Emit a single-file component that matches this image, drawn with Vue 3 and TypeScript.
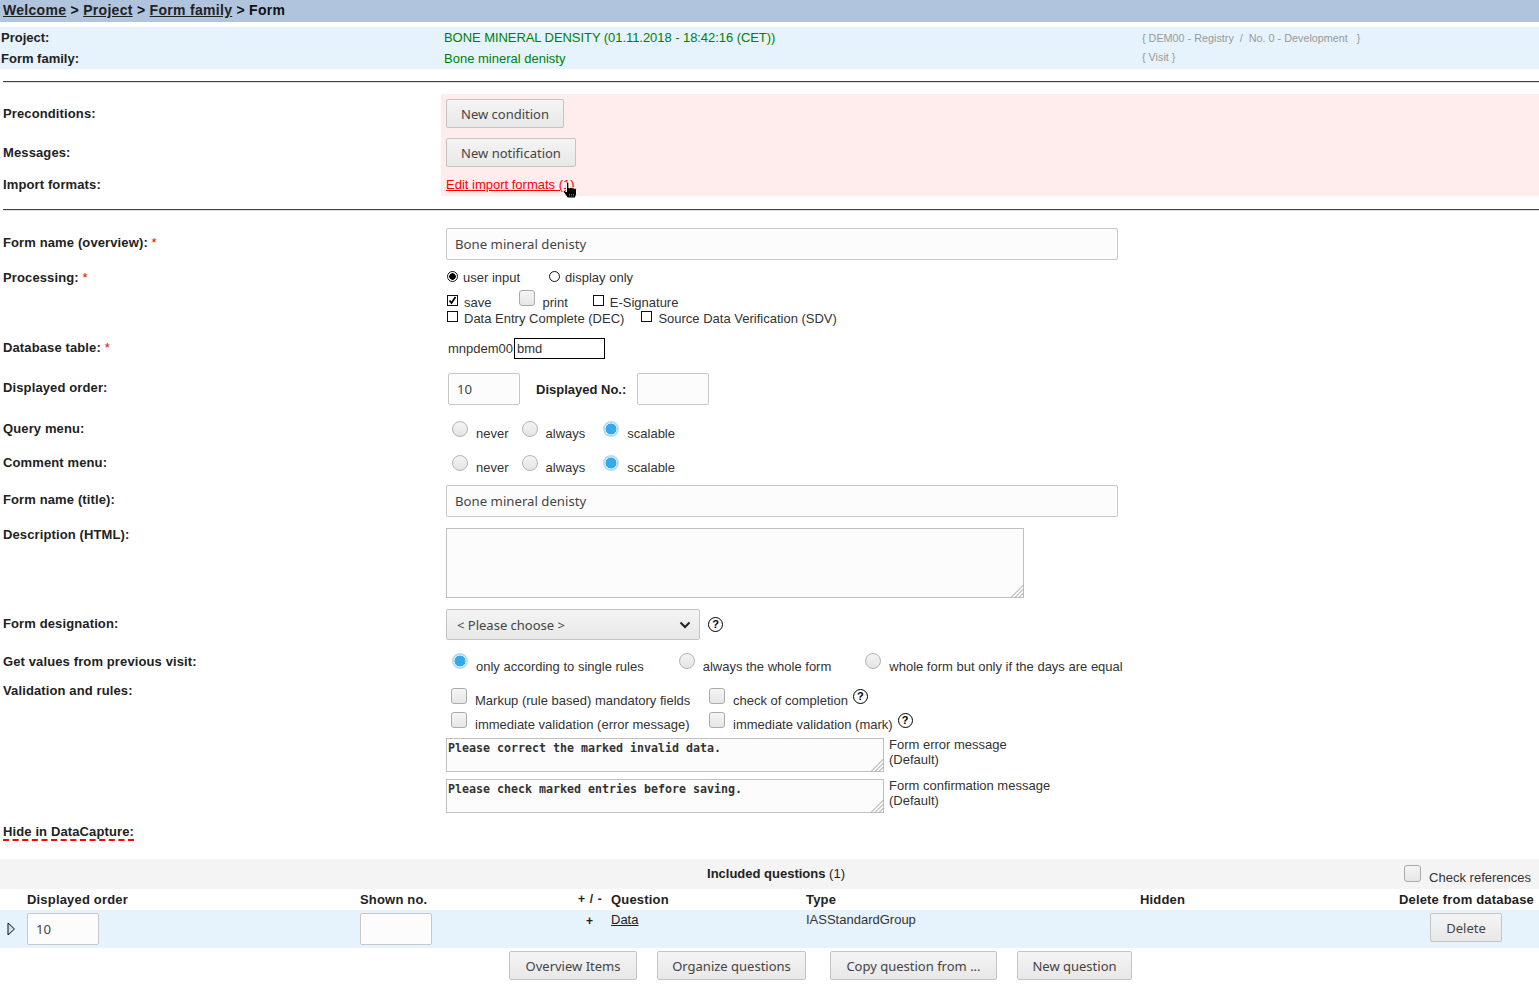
<script setup lang="ts">
const menus: { label: string; cls: string }[] = [
  { label: 'Query menu:', cls: 'h-query' },
  { label: 'Comment menu:', cls: 'h-comment' }
]
const actions: { text: string; cls: string }[] = [
  { text: 'Overview Items', cls: 'a1' },
  { text: 'Organize questions', cls: 'a2' },
  { text: 'Copy question from ...', cls: 'a3' },
  { text: 'New question', cls: 'a4' }
]
</script>

<template>
  <div class="page">
    <div class="crumbs">
      <a>Welcome</a> &gt; <a>Project</a> &gt; <a>Form family</a> &gt; Form
    </div>
    <div class="info">
      <div class="info-row">
        <b class="info-label">Project:</b>
        <span class="info-value first">BONE MINERAL DENSITY (01.11.2018 - 18:42:16 (CET))</span>
        <span class="info-meta m-top">{ DEM00 - Registry &nbsp;/ &nbsp;No. 0 - Development &nbsp; }</span>
      </div>
      <div class="info-row">
        <b class="info-label">Form family:</b>
        <span class="info-value">Bone mineral denisty</span>
        <span class="info-meta m-bot">{ Visit }</span>
      </div>
    </div>
    <hr class="rule rule-a" />

    <div class="pink">
      <div class="row h-pre"><b class="label">Preconditions:</b><div class="val"><button class="btn b-cond">New condition</button></div></div>
      <div class="row h-msg"><b class="label">Messages:</b><div class="val"><button class="btn b-noti">New notification</button></div></div>
      <div class="row h-imp"><b class="label">Import formats:</b><div class="val imp">
        <a class="red-link">Edit import formats (1)</a>
        <svg class="cursor" width="17" height="18" viewBox="0 0 17 18">
          <path d="M4.500 2c0-1.400 2.400-1.400 2.400 0v5h.6c.4-1.100 2.200-1 2.400.1.600-.8 2.200-.5 2.300.5.800-.6 2.300-.2 2.300 1v4.600L13.400 17H5.500L1.500 11.200c-.9-1.500.9-2.600 1.900-1.400l1.100 1.200z" fill="#000" stroke="#fff" stroke-width="1"/>
          <path d="M7 13.500h5M7 15h5" stroke="#888" stroke-width="0.8" stroke-dasharray="1 1"/>
        </svg>
      </div></div>
    </div>
    <hr class="rule rule-b" />

    <div class="row h-name"><b class="label">Form name (overview): <i class="req">*</i></b><div class="val"><input class="field wide" value="Bone mineral denisty" /></div></div>

    <div class="row h-proc"><b class="label">Processing: <i class="req">*</i></b>
      <div class="val proc">
        <div class="line l-radio">
          <span class="mini-radio on"></span><span class="t t-ui">user input</span>
          <span class="mini-radio r2"></span><span class="t">display only</span>
        </div>
        <div class="line l-save">
          <span class="mini-check on">
            <svg width="9" height="9" viewBox="0 0 9 9"><path d="M1.500 4.500l2 2.500 4-6" fill="none" stroke="#000" stroke-width="1.800"/></svg>
          </span><span class="t t-save">save</span>
          <span class="soft-check c-print"></span><span class="t t-print">print</span>
          <span class="mini-check c-esig"></span><span class="t">E-Signature</span>
        </div>
        <div class="line l-dec">
          <span class="mini-check"></span><span class="t t-dec">Data Entry Complete (DEC)</span>
          <span class="mini-check c-sdv"></span><span class="t">Source Data Verification (SDV)</span>
        </div>
      </div>
    </div>

    <div class="row h-db"><b class="label">Database table: <i class="req">*</i></b>
      <div class="val db"><span class="t">mnpdem00</span><input class="plain" value="bmd" /></div>
    </div>

    <div class="row h-order"><b class="label">Displayed order:</b>
      <div class="val order"><input class="field small" value="10" /><b class="order-label">Displayed No.:</b><input class="field small" /></div>
    </div>

    <div v-for="m in menus" :key="m.label" class="row" :class="m.cls"><b class="label">{{ m.label }}</b>
      <div class="val menu">
        <span class="soft-radio"></span><span class="t m1">never</span>
        <span class="soft-radio"></span><span class="t m2">always</span>
        <span class="soft-radio on"></span><span class="t">scalable</span>
      </div>
    </div>

    <div class="row h-title"><b class="label">Form name (title):</b><div class="val"><input class="field wide" value="Bone mineral denisty" /></div></div>

    <div class="row h-desc"><b class="label">Description (HTML):</b>
      <div class="val"><div class="area-wrap">
        <textarea class="area desc"></textarea>
        <svg class="grip" width="14" height="14" viewBox="0 0 14 14"><path d="M13.500 1L1 13.500M13.500 5L5 13.500M13.500 9L9 13.500" stroke="#999" stroke-width="1" fill="none"/></svg>
      </div></div>
    </div>

    <div class="row h-desig"><b class="label">Form designation:</b>
      <div class="val desig">
        <div class="select"><span>&lt; Please choose &gt;</span>
          <svg width="12" height="8" viewBox="0 0 12 8"><path d="M1.500 1.500L6 6l4.500-4.500" fill="none" stroke="#222" stroke-width="2"/></svg>
        </div>
        <span class="help">?</span>
      </div>
    </div>

    <div class="row h-prev"><b class="label">Get values from previous visit:</b>
      <div class="val prev">
        <span class="soft-radio on"></span><span class="t p1">only according to single rules</span>
        <span class="soft-radio"></span><span class="t p2">always the whole form</span>
        <span class="soft-radio"></span><span class="t">whole form but only if the days are equal</span>
      </div>
    </div>

    <div class="row h-valid"><b class="label">Validation and rules:</b>
      <div class="val valid">
        <div class="vline v1">
          <span class="soft-check"></span><span class="t v-a">Markup (rule based) mandatory fields</span>
          <span class="soft-check"></span><span class="t v-b">check of completion</span><span class="help h-up">?</span>
        </div>
        <div class="vline v2">
          <span class="soft-check"></span><span class="t v-a">immediate validation (error message)</span>
          <span class="soft-check"></span><span class="t v-b">immediate validation (mark)</span><span class="help h-up">?</span>
        </div>
        <div class="msg m-err">
          <div class="area-wrap">
            <textarea class="area mono">Please correct the marked invalid data.</textarea>
            <svg class="grip" width="14" height="14" viewBox="0 0 14 14"><path d="M13.500 1L1 13.500M13.500 5L5 13.500M13.500 9L9 13.500" stroke="#999" stroke-width="1" fill="none"/></svg>
          </div>
          <span class="t msg-note">Form error message<br />(Default)</span>
        </div>
        <div class="msg m-conf">
          <div class="area-wrap">
            <textarea class="area mono">Please check marked entries before saving.</textarea>
            <svg class="grip" width="14" height="14" viewBox="0 0 14 14"><path d="M13.500 1L1 13.500M13.500 5L5 13.500M13.500 9L9 13.500" stroke="#999" stroke-width="1" fill="none"/></svg>
          </div>
          <span class="t msg-note">Form confirmation message<br />(Default)</span>
        </div>
      </div>
    </div>

    <div class="row h-hide"><b class="label"><span class="dashed">Hide in DataCapture:</span></b></div>

    <div class="tbl-title">
      <span class="tbl-name"><b>Included questions</b> (1)</span>
      <span class="refs"><span class="soft-check"></span><span class="t">Check references</span></span>
    </div>
    <div class="tbl tbl-head">
      <b class="c-order">Displayed order</b>
      <b class="c-shown">Shown no.</b>
      <b class="c-pm">+ / -</b>
      <b class="c-q">Question</b>
      <b class="c-type">Type</b>
      <b class="c-hid">Hidden</b>
      <b class="c-del">Delete from database</b>
    </div>
    <div class="tbl tbl-row">
      <span class="c-tog">
        <svg width="9" height="14" viewBox="0 0 9 14"><path d="M1 1l6.500 6L1 13z" fill="#cfe0ea" stroke="#111" stroke-width="1"/></svg>
      </span>
      <span class="c-order"><input class="field small" value="10" /></span>
      <span class="c-shown"><input class="field small" /></span>
      <b class="c-pm c-plus">+</b>
      <a class="c-q t-link">Data</a>
      <span class="c-type t-type">IASStandardGroup</span>
      <span class="c-hid"></span>
      <span class="c-del"><button class="btn btn-del">Delete</button></span>
    </div>
    <div class="actions">
      <button v-for="a in actions" :key="a.text" class="btn" :class="a.cls">{{ a.text }}</button>
    </div>
  </div>
</template>

<style scoped>
.page {
  position: relative;
  height: 984px;
  overflow: hidden;
  font-family: "Liberation Sans", Arial, sans-serif;
  font-size: 13px;
  color: #222;
  background: #fff;
}
b { font-weight: 700; }
i { font-style: normal; }
.crumbs {
  height: 22px;
  line-height: 20px;
  padding-left: 3px;
  background: #b0c4de;
  font-size: 14px;
  font-weight: 700;
  letter-spacing: 0.3px;
  color: #111;
}
.crumbs a { text-decoration: underline; color: #222; }
.info {
  margin-top: 5px;
  height: 42px;
  background: #e6f3fd;
}
.info-row {
  display: grid;
  grid-template-columns: 443px 698px 1fr;
  height: 21px;
  line-height: 21px;
  padding-left: 1px;
}
.info-value { color: #008000; }
.info-value.first { letter-spacing: -0.06px; }
.info-meta { color: #999; font-size: 10.800px; }
.m-top { line-height: 22px; }
.m-bot { line-height: 19px; }
.info-label { color: #222; }
.rule { border: 0; margin: 0 0 0 3px; height: 2px; border-top: 1px solid #444; border-bottom: 1px solid #ddd; box-sizing: border-box; }
.rule-a { margin-top: 12px; }
.rule-b { margin-top: 13px; }
.pink { margin-top: 11px; position: relative; }
.pink::before {
  content: "";
  position: absolute;
  left: 441px;
  right: 0;
  top: 0;
  bottom: 0;
  background: #ffecec;
}
.row {
  position: relative;
  display: grid;
  grid-template-columns: 446px 1fr;
}
.label { padding-left: 3px; color: #222; letter-spacing: 0.12px; }
.val { min-width: 0; position: relative; }
.req { color: #e00; font-weight: 400; }

.h-pre { height: 39px; padding-top: 5px; box-sizing: border-box; }
.h-pre .label { line-height: 30px; }
.h-msg { height: 39px; padding-top: 5px; box-sizing: border-box; }
.h-msg .label { line-height: 30px; }
.h-imp { height: 24px; line-height: 26px; }
.imp { display: flex; }
.red-link { color: #f00; text-decoration: underline; }
.cursor { position: absolute; left: 116px; top: 9px; }
.btn {
  height: 29px;
  padding: 0;
  text-align: center;
  border: 1px solid #c4c4c4;
  border-radius: 2px;
  background: linear-gradient(#f4f4f4, #e8e8e8);
  color: #444;
  font-family: "Noto Sans", sans-serif;
  font-size: 13px;
  white-space: nowrap;
  display: block;
  box-sizing: border-box;
}
.b-cond { width: 118px; }
.b-noti { width: 130px; }
.btn-del { width: 72px; }
.a1 { width: 128px; }
.a2 { width: 149px; margin-left: 20px; }
.a3 { width: 167px; margin-left: 24px; }
.a4 { width: 115px; margin-left: 20px; }

.h-name { margin-top: 17px; height: 32px; }
.h-name .label { line-height: 30px; }
.field {
  box-sizing: border-box;
  height: 32px;
  border: 1px solid #c8c8c8;
  border-radius: 2px;
  background: #fcfcfc;
  color: #444;
  font-family: "Noto Sans", sans-serif;
  font-size: 13.200px;
  padding: 0 8px;
  display: block;
}
.wide { width: 672px; }
.small { width: 72px; }

.h-proc { height: 75px; }
.h-proc .label { padding-top: 10px; }
.proc { margin-left: 1px; }
.t { color: #333; }
.line { display: flex; align-items: center; position: relative; }
.l-radio { height: 31px; padding-top: 4px; box-sizing: border-box; }
.l-save { height: 22px; }
.l-dec { height: 10px; }
.mini-radio {
  width: 9px; height: 9px;
  border: 1px solid #111; border-radius: 50%;
  background: #fff; flex: none; margin-top: -3px;
  margin-right: 5px;
  box-sizing: content-box;
}
.mini-radio.on { background: radial-gradient(circle, #000 0 3px, #fff 3.500px); }
.r2 { margin-left: 29px; }
.mini-check {
  width: 9px; height: 9px; border: 1px solid #111; background: #fff; flex: none;
  margin-top: -4px; margin-right: 6px; display: flex; align-items: center; justify-content: center;
}
.t-save { margin-right: 28px; }
.soft-check {
  width: 16px; height: 16px; box-sizing: border-box;
  border: 1px solid #aaa; border-radius: 3px;
  background: linear-gradient(#f5f5f5, #e6e6e6);
  flex: none; display: inline-block;
}
.c-print { margin-right: 7px; margin-top: -8px; }
.t-print { margin-right: 25px; }
.t-dec { margin-right: 17px; }
.c-esig { margin-top: -4px; margin-right: 6px; }
.c-sdv { margin-right: 6px; }

.h-db { margin-top: 3px; height: 21px; }
.h-db .label { line-height: 20px; }
.db { display: flex; align-items: center; padding-left: 2px; }
.plain {
  box-sizing: border-box; width: 91px; height: 21px;
  border: 1px solid #000; border-radius: 0; margin-left: 1px; padding: 0 2px;
  font: inherit; color: #333; background: #fff;
}

.h-order { margin-top: 14px; height: 32px; }
.h-order .label { line-height: 30px; }
.order { display: flex; align-items: center; padding-left: 2px; }
.order-label { margin: 0 11px 0 16px; }

.h-query { margin-top: 14px; height: 34px; }
.h-comment { height: 32px; }
.h-query .label, .h-comment .label { line-height: 20px; }
.menu { display: flex; padding-left: 6px; line-height: 28px; align-items: flex-start; }
.soft-radio {
  width: 16px; height: 16px; box-sizing: border-box;
  border: 1px solid #b4b4b4; border-radius: 50%;
  background: linear-gradient(#f4f4f4, #e4e4e4);
  flex: none; margin-right: 8px; margin-top: 2px;
}
.soft-radio.on {
  border: 2px solid #b5dcf5;
  background: radial-gradient(circle, #36a9ea 0 5.200px, #fff 5.800px);
}
.m1 { margin-right: 13px; }
.m2 { margin-right: 18px; }
.menu .t { margin-top: 1px; }

.h-title { height: 32px; }
.h-title .label { line-height: 30px; }
.h-desc { margin-top: 11px; height: 70px; }
.h-desc .label { line-height: 13px; }
.area-wrap { position: relative; display: block; width: fit-content; }
.grip { position: absolute; right: 0; bottom: 0; pointer-events: none; }
.area {
  box-sizing: border-box; display: block;
  border: 1px solid #c0c0c0; border-radius: 0; background: #fcfcfc;
  resize: none;
}
.desc { width: 578px; height: 70px; }

.h-desig { margin-top: 11px; height: 31px; }
.h-desig .label { line-height: 30px; }
.desig { display: flex; align-items: center; }
.select {
  box-sizing: border-box; width: 254px; height: 31px;
  border: 1px solid #c4c4c4; border-radius: 2px;
  background: linear-gradient(#f4f4f4, #e8e8e8);
  display: flex; align-items: center; justify-content: space-between;
  padding: 0 8px 0 10px;
  font-family: "Noto Sans", sans-serif; font-size: 13px; color: #444;
}
.help {
  box-sizing: border-box; width: 15px; height: 15px; margin-left: 8px;
  border: 1.400px solid #000; border-radius: 50%; background: #fff;
  font-size: 11px; font-weight: 700; line-height: 13px; text-align: center; color: #000;
  flex: none;
}

.h-prev { margin-top: 11px; height: 30px; }
.h-prev .label { line-height: 22px; }
.prev { display: flex; padding-left: 6px; line-height: 31px; align-items: flex-start; }
.prev .soft-radio { margin-top: 2px; margin-right: 8px; }
.p1 { margin-right: 35px; }
.p2 { margin-right: 34px; }

.h-valid { height: 132px; }
.h-valid .label { line-height: 20px; }
.vline { display: flex; align-items: center; height: 24px; padding-left: 5px; }
.vline .soft-check { margin-right: 8px; margin-top: -9px; }
.v-a { width: 234px; }
.help.h-up { margin-left: 5px; margin-top: -7px; }
.v1 { margin-top: 7px; }
.msg { display: flex; align-items: flex-start; }
.m-err { margin-top: 2px; }
.m-conf { margin-top: 7px; }
.mono {
  width: 438px; height: 34px; padding: 3px 1px;
  font-family: "DejaVu Sans Mono", monospace; font-size: 11.630px; font-weight: 700; color: #333;
  overflow: hidden; line-height: 13px;
}
.msg-note { margin: -1px 0 0 5px; line-height: 15px; }

.h-hide { height: 20px; margin-top: 10px; }
.h-hide .label { line-height: 17px; }
.dashed { border-bottom: 2px dashed #f00; display: inline-block; line-height: 15px; }

.tbl-title {
  margin-top: 16px; height: 30px; background: #f4f4f4; position: relative;
  text-align: center; line-height: 29px; padding-left: 13px; box-sizing: border-box;
}
.refs { position: absolute; right: 8px; top: 6px; display: flex; line-height: 26px; height: 20px; }
.refs .soft-check { width: 17px; height: 17px; margin-right: 8px; }
.tbl { display: grid; grid-template-columns: 27px 333px 218px 33px 195px 334px 100px 1fr; }
.tbl-head { height: 21px; line-height: 21px; letter-spacing: 0.18px; }
.tbl-head .c-order { grid-column: 2; }
.tbl-head .c-del { text-align: right; padding-right: 5px; }
.c-pm { font-size: 12px; word-spacing: 1px; }
.tbl-row { height: 38px; background: #e6f3fd; align-items: start; }
.c-tog { padding: 12px 0 0 7px; }
.tbl-row .c-order, .tbl-row .c-shown { padding-top: 3px; }
.c-plus { padding: 3px 0 0 8px; line-height: 17px; }
.t-link { text-decoration: underline; color: #222; padding-top: 1px; line-height: 17px; justify-self: start; }
.t-type { padding-top: 1px; line-height: 17px; color: #333; }
.tbl-row .c-del { display: flex; justify-content: flex-end; padding: 3px 37px 0 0; }
.actions { display: flex; margin-top: 3px; padding-left: 509px; }
</style>

<style>
html, body { margin: 0; padding: 0; background: #fff; }
</style>
